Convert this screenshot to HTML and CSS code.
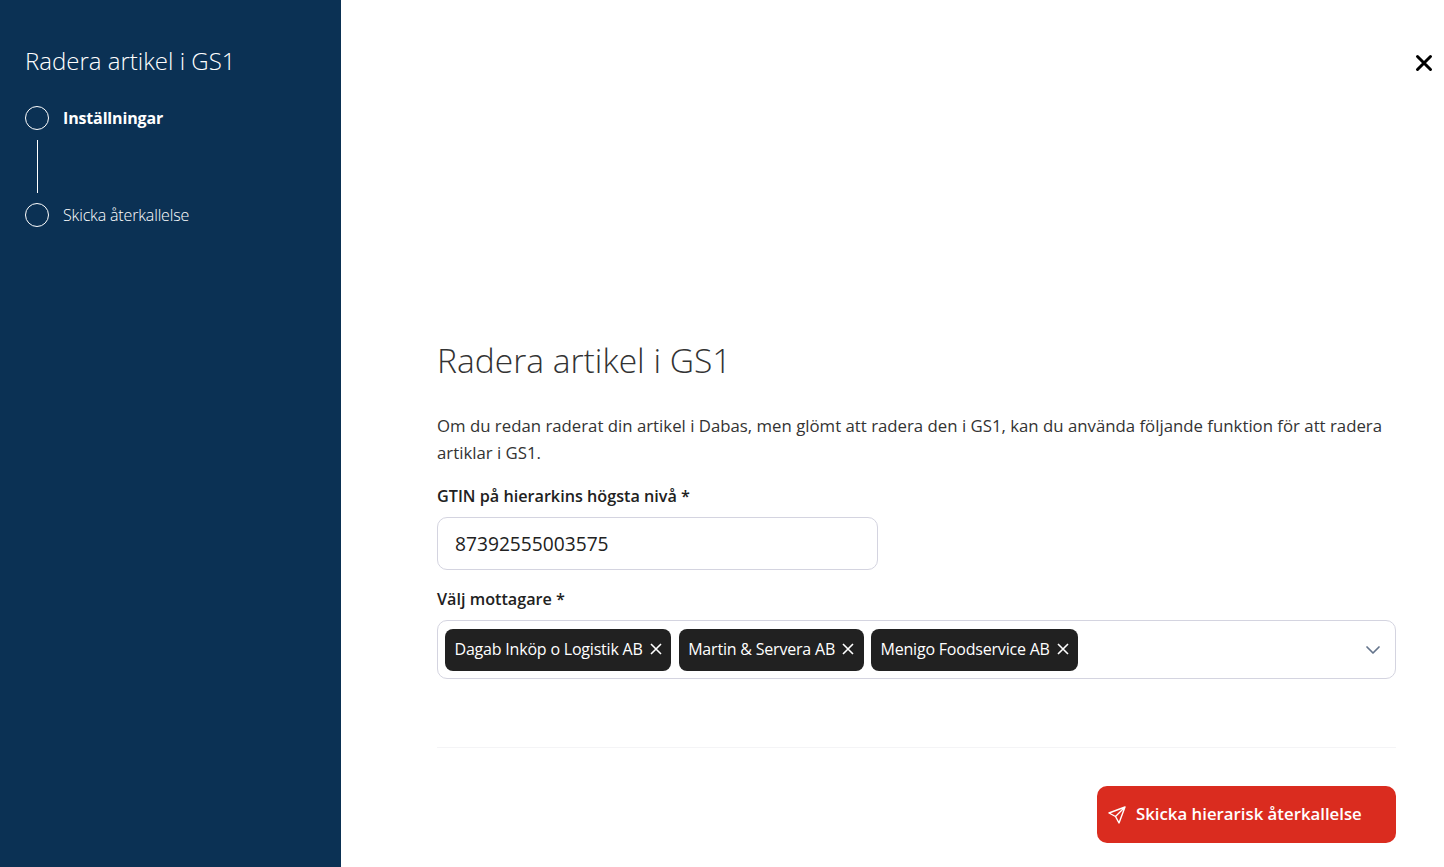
FILE: index.html
```html
<!DOCTYPE html>
<html lang="sv">
<head>
  <meta charset="UTF-8">
  <title>Radera artikel i GS1</title>
  <link rel="stylesheet" href="styles.css">
</head>
<body>

  <aside class="sidebar">
    <h2 class="sidebar-title">Radera artikel i GS1</h2>
    <div class="step step-active">
      <span class="step-dot"></span>
      <span class="step-label">Inställningar</span>
    </div>
    <div class="step-line"></div>
    <div class="step">
      <span class="step-dot"></span>
      <span class="step-label">Skicka återkallelse</span>
    </div>
  </aside>

  <main class="main">
    <button class="close" aria-label="Stäng">
      <svg width="18" height="18" viewBox="0 0 18 18" fill="none" stroke="#000" stroke-width="3" stroke-linecap="round">
        <path d="M2.5 2.5l13 13M15.5 2.5l-13 13"/>
      </svg>
    </button>

    <h1 class="title">Radera artikel i GS1</h1>
    <p class="intro">Om du redan raderat din artikel i Dabas, men glömt att radera den i GS1, kan du använda följande funktion för att radera artiklar i GS1.</p>

    <label class="field-label" for="gtin">GTIN på hierarkins högsta nivå *</label>
    <input class="text-input" id="gtin" type="text" value="87392555003575">

    <div class="field-label label-select">Välj mottagare *</div>
    <div class="select">
      <span class="chip">Dagab Inköp o Logistik AB
        <svg width="12" height="12" viewBox="0 0 12 12" stroke="#fff" stroke-width="1.6"><path d="M1 1l10 10M11 1L1 11"/></svg>
      </span>
      <span class="chip">Martin &amp; Servera AB
        <svg width="12" height="12" viewBox="0 0 12 12" stroke="#fff" stroke-width="1.6"><path d="M1 1l10 10M11 1L1 11"/></svg>
      </span>
      <span class="chip">Menigo Foodservice AB
        <svg width="12" height="12" viewBox="0 0 12 12" stroke="#fff" stroke-width="1.6"><path d="M1 1l10 10M11 1L1 11"/></svg>
      </span>
      <svg class="chevron" width="16" height="16" viewBox="0 0 16 16" fill="none" stroke="#64748b" stroke-width="1.7" stroke-linecap="round" stroke-linejoin="round">
        <path d="M2 5l6 6 6-6"/>
      </svg>
    </div>

    <hr class="divider">

    <div class="actions">
      <button class="send-btn">
        <svg width="18" height="18" viewBox="0 0 18 18" fill="none" stroke="#fff" stroke-width="1.4" stroke-linecap="round" stroke-linejoin="round">
          <path d="M17 1L1 7l6.5 3.5L11 17zM17 1L7.5 10.5"/>
        </svg>
        <span class="send-label">Skicka hierarisk återkallelse</span>
      </button>
    </div>
  </main>

</body>
</html>
```

FILE: styles.css
```css
* {
  box-sizing: border-box;
}

html, body {
  height: 100%;
}

body {
  margin: 0;
  display: flex;
  font-family: 'Open Sans', sans-serif;
  color: #212121;
  background: #fff;
  overflow: hidden;
}

.sidebar {
  width: 341px;
  flex-shrink: 0;
  background: #0b3154;
  color: #fff;
  padding: 43px 25px 0;
}

.sidebar-title {
  margin: 0 0 28px;
  font-size: 24px;
  font-weight: 300;
  line-height: 35px;
}

.step {
  display: flex;
  align-items: center;
  gap: 14px;
  font-size: 16px;
  font-weight: 300;
  letter-spacing: -0.15px;
}

.step-active {
  font-weight: 700;
}

.step-dot {
  width: 24px;
  height: 24px;
  border: 1px solid #fff;
  border-radius: 50%;
}

.step-line {
  width: 1px;
  height: 53px;
  margin: 10px 0 10px 12px;
  background: #fff;
}

.main {
  position: relative;
  flex: 1;
  display: flex;
  flex-direction: column;
  justify-content: flex-end;
  padding: 0 48px 24px 96px;
}

.close {
  position: absolute;
  top: 54px;
  right: 11px;
  padding: 0;
  border: none;
  background: none;
  line-height: 0;
  cursor: pointer;
}

.title {
  margin: 0 0 30px;
  font-size: 33.6px;
  font-weight: 300;
  line-height: 44px;
  color: #333;
}

.intro {
  margin: 0 0 17px;
  font-size: 16.8px;
  line-height: 27px;
  color: #333;
}

.field-label {
  display: block;
  margin-bottom: 8px;
  font-size: 16.2px;
  font-weight: 600;
  line-height: 26px;
}

.label-select {
  margin-top: 16px;
}

.text-input {
  display: block;
  width: 441px;
  height: 53px;
  padding: 0 17px;
  border: 1px solid #d4d4e0;
  border-radius: 10px;
  font-family: inherit;
  font-size: 19.2px;
  color: #212121;
}

.select {
  display: flex;
  align-items: center;
  gap: 7.5px;
  height: 59px;
  padding: 0 7px;
  border: 1px solid #d4d4e0;
  border-radius: 10px;
}

.chip {
  display: flex;
  align-items: center;
  gap: 7px;
  height: 42px;
  padding: 0 9.5px 2px;
  border-radius: 8px;
  background: #212121;
  color: #fff;
  font-size: 16px;
  letter-spacing: -0.2px;
  white-space: nowrap;
}

.chevron {
  margin-left: auto;
  margin-right: 7px;
}

.divider {
  width: 100%;
  margin: 68px 0 38px;
  border: none;
  border-top: 1px solid #f4f4f6;
}

.actions {
  display: flex;
  justify-content: flex-end;
}

.send-btn {
  display: flex;
  align-items: center;
  gap: 10px;
  width: 299px;
  height: 57px;
  padding: 0 11px;
  border: none;
  border-radius: 10px;
  background: #da2c1f;
  color: #fff;
  font-family: inherit;
  font-size: 16.8px;
  font-weight: 600;
  cursor: pointer;
}

.send-label {
  position: relative;
  top: -1px;
}
```
